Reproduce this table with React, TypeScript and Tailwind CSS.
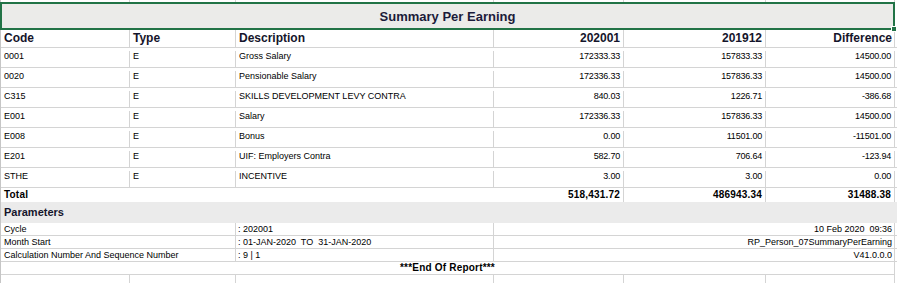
import React from 'react';

const grid = 'grid grid-cols-[129px_106px_258px_130px_142px_129px]';
const line = 'border-[#d4d4d4]';

type Earning = {
    code: string;
    type: string;
    description: string;
    current: string;
    previous: string;
    difference: string;
};

const earnings: Earning[] = [
    { code: '0001', type: 'E', description: 'Gross Salary', current: '172333.33', previous: '157833.33', difference: '14500.00' },
    { code: '0020', type: 'E', description: 'Pensionable Salary', current: '172336.33', previous: '157836.33', difference: '14500.00' },
    { code: 'C315', type: 'E', description: 'SKILLS DEVELOPMENT LEVY CONTRA', current: '840.03', previous: '1226.71', difference: '-386.68' },
    { code: 'E001', type: 'E', description: 'Salary', current: '172336.33', previous: '157836.33', difference: '14500.00' },
    { code: 'E008', type: 'E', description: 'Bonus', current: '0.00', previous: '11501.00', difference: '-11501.00' },
    { code: 'E201', type: 'E', description: 'UIF: Employers Contra', current: '582.70', previous: '706.64', difference: '-123.94' },
    { code: 'STHE', type: 'E', description: 'INCENTIVE', current: '3.00', previous: '3.00', difference: '0.00' },
];

const params = [
    { label: 'Cycle', value: ': 202001', right: '10 Feb 2020  09:36' },
    { label: 'Month Start', value: ': 01-JAN-2020  TO  31-JAN-2020', right: 'RP_Person_07SummaryPerEarning' },
    { label: 'Calculation Number And Sequence Number', value: ': 9 | 1', right: 'V41.0.0.0' },
];

const EmptyRow = ({ h }: { h: string }) => (
    <div className={`${grid} ${h} border-l border-[#c6c6c6]`}>
        {[0, 1, 2, 3, 4, 5].map((i) => (
            <div key={i} className={`border-r ${line}`} />
        ))}
    </div>
);

const App = () => {
    return (
        <div className="w-[897px] h-[283px] overflow-hidden bg-white text-black font-['Liberation_Sans',Arial,sans-serif]">
            <EmptyRow h="h-[2px]" />

            <div className="relative w-[895px] h-[28px] border-2 border-[#217346] bg-[#ebebe9] flex items-center justify-center">
                <span className="text-[13px] font-bold text-[#1b1b3a] leading-none">Summary Per Earning</span>
                <div className="absolute -right-[4px] -bottom-[4px] w-[6px] h-[6px] bg-[#217346] border border-white" />
            </div>

            <div className="border-l border-[#c6c6c6]">
                {/* column headings */}
                <div className={`${grid} h-[18px] border-b ${line} text-[12px] font-bold text-[#15152b] leading-[17px]`}>
                    <div className={`border-r ${line} px-[3px]`}>Code</div>
                    <div className={`border-r ${line} px-[3px]`}>Type</div>
                    <div className={`border-r ${line} px-[3px]`}>Description</div>
                    <div className={`border-r ${line} px-[3px] text-right`}>202001</div>
                    <div className={`border-r ${line} px-[3px] text-right`}>201912</div>
                    <div className={`border-r ${line} px-[2px] text-right`}>Difference</div>
                </div>

                {earnings.map((e) => (
                    <div key={e.code} className={`${grid} h-[20px] border-b ${line} text-[9px] leading-[11px] pt-[3px]`}>
                        <div className={`border-r ${line} px-[3px]`}>{e.code}</div>
                        <div className={`border-r ${line} px-[3px]`}>{e.type}</div>
                        <div className={`border-r ${line} px-[3px]`}>{e.description}</div>
                        <div className={`border-r ${line} px-[3px] text-right tracking-[-0.2px]`}>{e.current}</div>
                        <div className={`border-r ${line} px-[3px] text-right tracking-[-0.2px]`}>{e.previous}</div>
                        <div className={`border-r ${line} px-[3px] text-right tracking-[-0.2px]`}>{e.difference}</div>
                    </div>
                ))}

                {/* totals */}
                <div className="grid grid-cols-[493px_130px_142px_129px] h-[14px] text-[10px] font-bold leading-[13px] tracking-[0.2px]">
                    <div className="px-[3px]">Total</div>
                    <div className={`border-r ${line} px-[3px] text-right`}>518,431.72</div>
                    <div className={`border-r ${line} px-[3px] text-right`}>486943.34</div>
                    <div className={`border-r ${line} px-[3px] text-right`}>31488.38</div>
                </div>

                <div className="h-[21px] bg-[#ebebeb] px-[3px] pt-[2px] text-[11px] font-bold leading-[16px] text-[#15152b]">
                    Parameters
                </div>

                {params.map((p) => (
                    <div key={p.label} className={`grid grid-cols-[235px_258px_401px] h-[13px] border-b ${line} text-[9px] leading-[12px]`}>
                        <div className={`border-r ${line} px-[3px] whitespace-nowrap`}>{p.label}</div>
                        <div className={`border-r ${line} px-[2px] whitespace-pre`}>{p.value}</div>
                        <div className={`border-r ${line} px-[2px] text-right whitespace-pre`}>{p.right}</div>
                    </div>
                ))}

                <div className={`w-[894px] h-[13px] border-b border-r ${line} text-center text-[10px] font-bold leading-[12px] tracking-[0.2px]`}>
                    ***End Of Report***
                </div>

                <div className={`${grid} h-[10px]`}>
                    {[0, 1, 2, 3, 4, 5].map((i) => (
                        <div key={i} className={`border-r ${line}`} />
                    ))}
                </div>
            </div>
        </div>
    );
};

export default App;
